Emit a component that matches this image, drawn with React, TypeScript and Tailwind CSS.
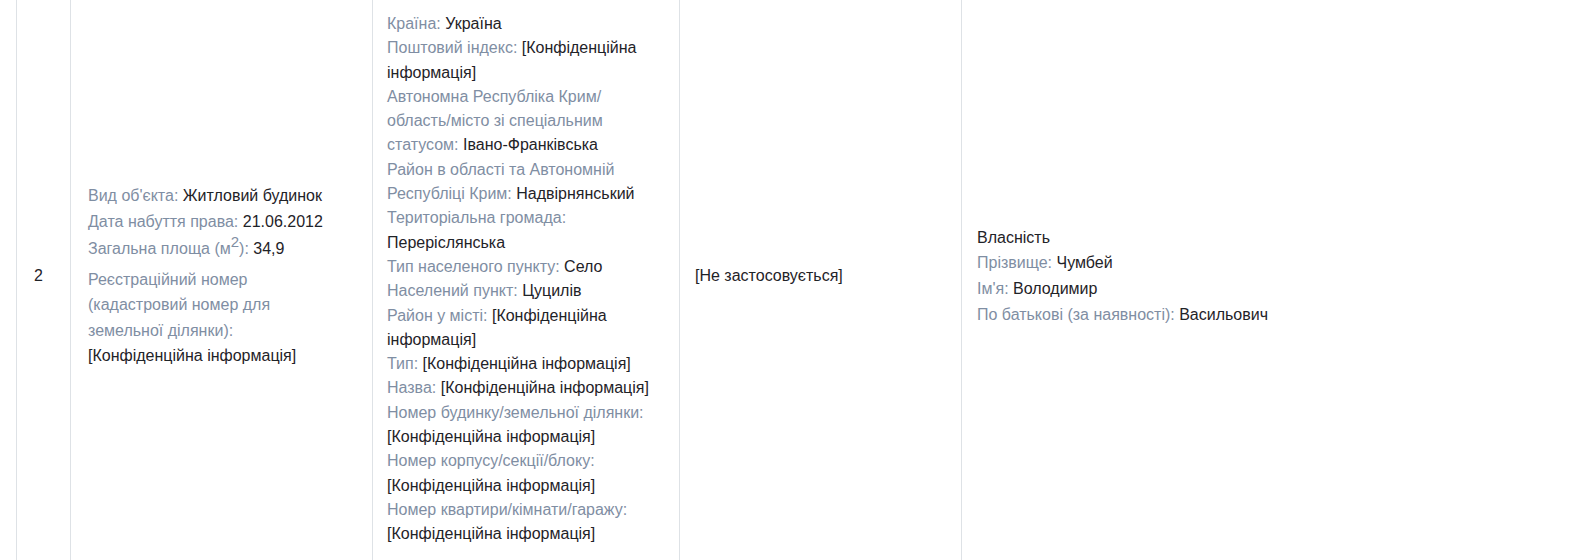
import type { ReactNode } from "react";

const CONF = "[Конфіденційна інформація]";

type Item = [ReactNode, string];

const objectInfo: Item[] = [
  ["Вид об'єкта:", "Житловий будинок"],
  ["Дата набуття права:", "21.06.2012"],
];

const address: Item[] = [
  ["Країна:", "Україна"],
  ["Поштовий індекс:", CONF],
  [
    <>
      Автономна Республіка Крим/<wbr />
      область/місто зі спеціальним статусом:
    </>,
    "Івано-Франківська",
  ],
  ["Район в області та Автономній Республіці Крим:", "Надвірнянський"],
  ["Територіальна громада:", "Переріслянська"],
  ["Тип населеного пункту:", "Село"],
  ["Населений пункт:", "Цуцилів"],
  ["Район у місті:", CONF],
  ["Тип:", CONF],
  ["Назва:", CONF],
  ["Номер будинку/земельної ділянки:", CONF],
  ["Номер корпусу/секції/блоку:", CONF],
  ["Номер квартири/кімнати/гаражу:", CONF],
];

const owner: Item[] = [
  ["Прізвище:", "Чумбей"],
  ["Ім'я:", "Володимир"],
  ["По батькові (за наявності):", "Васильович"],
];

function Field({ label, value }: { label: ReactNode; value: string }) {
  return (
    <div>
      <span className="text-[#7f8ea3]">{label}</span>{" "}
      <span className="text-[#1f2328]">{value}</span>
    </div>
  );
}

export default function App() {
  return (
    <div
      className="h-[560px] w-[1580px] overflow-hidden bg-white pl-4 text-[16px] text-[#1f2328]"
      style={{ fontFamily: '"Liberation Sans", Arial, sans-serif' }}
    >
      <div className="flex h-[560px] items-stretch">
        {/* row number */}
        <div className="flex w-[54px] shrink-0 flex-col justify-center border-l border-[#dee2e6] pb-[8px] pl-[17px] leading-[25.6px]">
          2
        </div>

        {/* object */}
        <div className="flex w-[302px] shrink-0 flex-col justify-center border-l border-[#dee2e6] pb-[8px] pl-[17px] pr-[34px] leading-[25.6px]">
          {objectInfo.map(([l, v], i) => (
            <Field key={i} label={l} value={v} />
          ))}
          <div className="pt-[2px]">
            <span className="text-[#7f8ea3]">
              Загальна площа (м
              <span className="relative -top-[7px] text-[15px] leading-none">2</span>
              ):
            </span>{" "}
            <span>34,9</span>
          </div>
          <div className="mt-[5px]">
            <span className="text-[#7f8ea3]">
              Реєстраційний номер (кадастровий номер для земельної ділянки):
            </span>{" "}
            <span>{CONF}</span>
          </div>
        </div>

        {/* address */}
        <div className="flex w-[307px] shrink-0 flex-col border-l border-[#dee2e6] pl-[14px] pr-[22px] pt-[12px] leading-[24.3px]">
          {address.map(([l, v], i) => (
            <Field key={i} label={l} value={v} />
          ))}
        </div>

        {/* encumbrance */}
        <div className="flex w-[282px] shrink-0 flex-col justify-center border-l border-[#dee2e6] pb-[8px] pl-[15px] pr-4 leading-[25.6px]">
          [Не застосовується]
        </div>

        {/* right holder */}
        <div className="flex flex-1 flex-col justify-center border-l border-[#dee2e6] pb-[8px] pl-[15px] leading-[25.6px]">
          <div>Власність</div>
          {owner.map(([l, v], i) => (
            <Field key={i} label={l} value={v} />
          ))}
        </div>
      </div>
    </div>
  );
}
